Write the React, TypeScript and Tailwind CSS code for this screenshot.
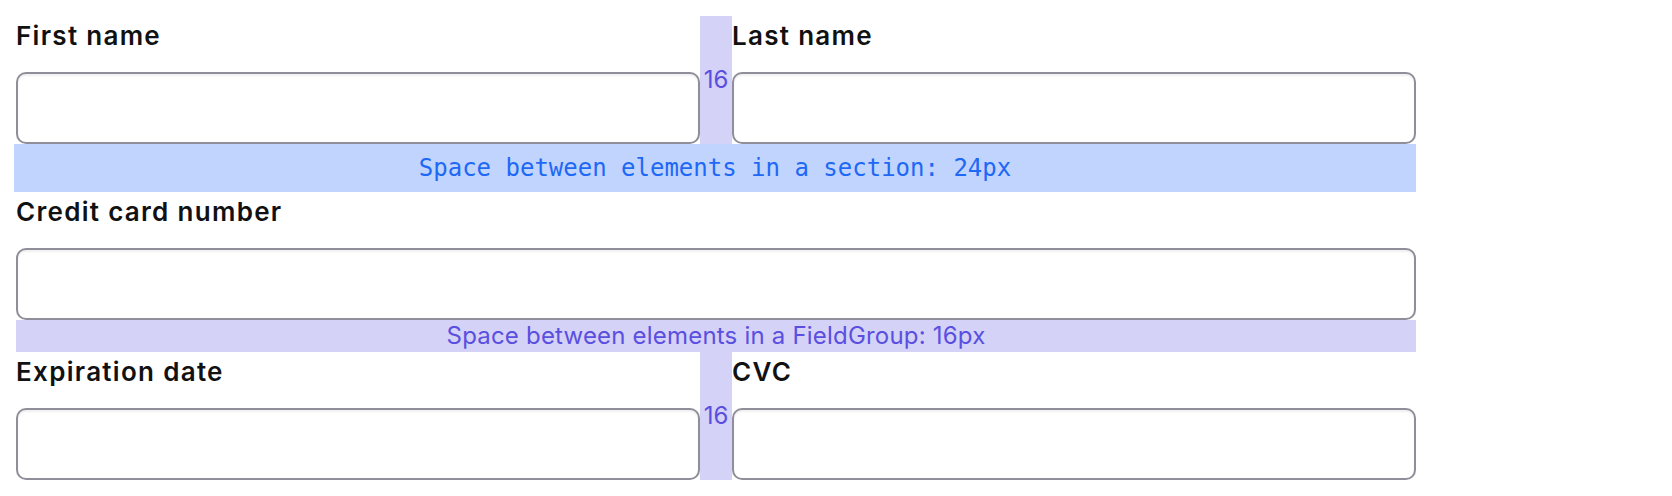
const Field = ({ label }: { label: string }) => (
  <div className="flex flex-col gap-4">
    <label className="h-10 leading-10 text-[26px] font-semibold tracking-[1.3px] text-[#111111]">{label}</label>
    <input
      type="text"
      className="h-[72px] w-full rounded-[10px] border-2 border-[#8f8f9b] bg-white shadow-[inset_0_2px_2px_rgba(0,0,0,0.06)] outline-none"
    />
  </div>
)

const Gap = () => (
  <div className="w-8 bg-[#d4d2f6] text-center text-[24px] leading-7 text-[#5a4fe0]">
    <div className="pt-[50px]">16</div>
  </div>
)

const App = () => {
  return (
    <div className="min-h-[496px] bg-white font-['Inter',sans-serif]">
      <div className="flex w-[1416px] flex-col pt-4">
        <div className="flex pl-4">
          <div className="flex-1">
            <Field label="First name" />
          </div>
          <Gap />
          <div className="flex-1">
            <Field label="Last name" />
          </div>
        </div>

        <div className="ml-[14px] h-12 bg-[#c0d4fe] text-center font-['DejaVu_Sans_Mono',monospace] text-[24px] leading-[48px] text-[#1e68f5]">
          Space between elements in a section: 24px
        </div>

        <div className="pl-4">
          <Field label="Credit card number" />
          <div className="h-8 bg-[#d4d2f6] text-center text-[24px] tracking-[0.2px] leading-8 text-[#5a4fe0]">
            Space between elements in a FieldGroup: 16px
          </div>
          <div className="flex">
            <div className="flex-1">
              <Field label="Expiration date" />
            </div>
            <Gap />
            <div className="flex-1">
              <Field label="CVC" />
            </div>
          </div>
        </div>
      </div>
    </div>
  )
}

export default App
